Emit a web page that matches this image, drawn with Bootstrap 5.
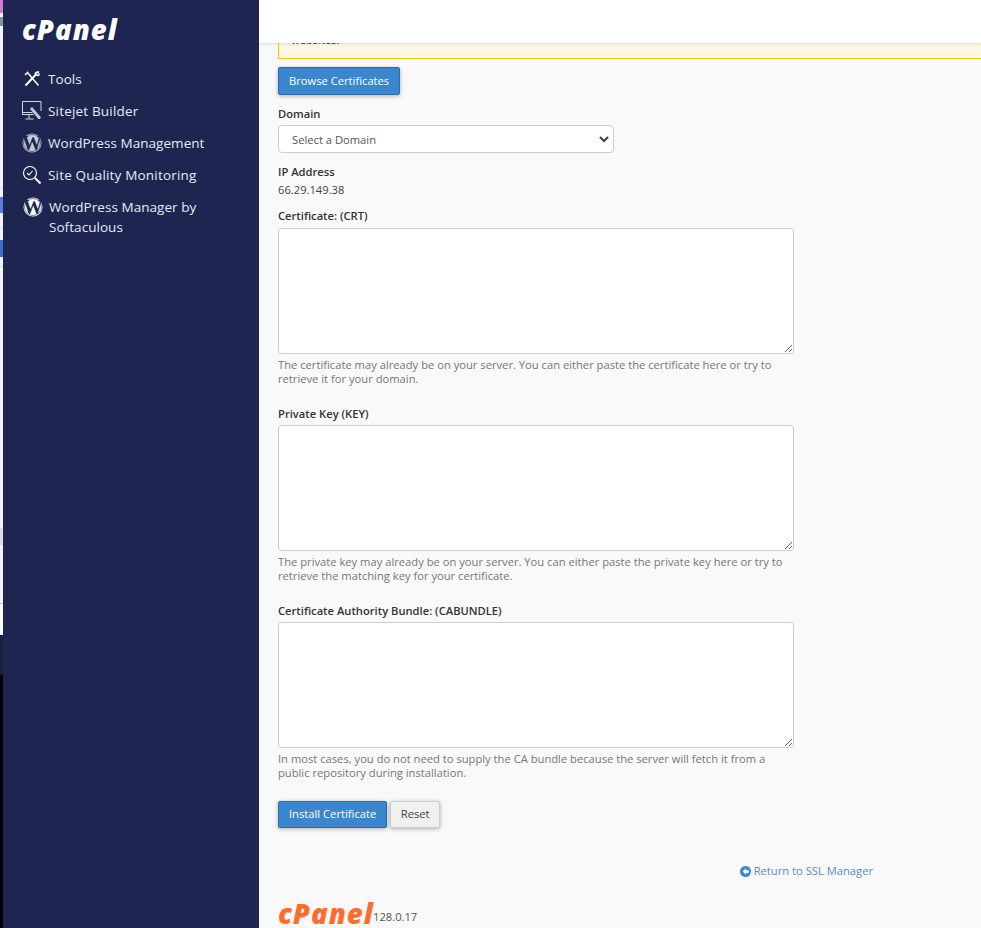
<!DOCTYPE html>
<html lang="en">
<head>
<meta charset="utf-8">
<title>Install SSL</title>
<link href="https://cdn.jsdelivr.net/npm/bootstrap@5.3.0/dist/css/bootstrap.min.css" rel="stylesheet">
<style>
html,body{height:100%;}
body{font-family:"Open Sans","Noto Sans",sans-serif;font-size:11.2px;line-height:16px;color:#333;background:#f9f9f9;overflow:hidden;}
.shell{height:928px;}
.edge-strip{width:3px;flex:none;background:linear-gradient(to bottom,#d27ad6 0 13px,#fff 13px 17px,#8a94a0 17px 26px,#f3f3f3 26px 187px,#ddd 187px 188px,#f3f3f3 188px 197px,#5b7be8 197px 213px,#f3f3f3 213px 227px,#ddd 227px 228px,#f3f3f3 228px 240px,#3a6fd0 240px 257px,#f3f3f3 257px 266px,#ddd 266px 267px,#f3f3f3 267px 528px,#ddd 528px 545px,#f3f3f3 545px 603px,#c8c8c8 603px 604px,#fff 604px 635px,#16233f 635px 675px,#000 675px);}
.side-rail{width:256px;flex:none;background:#1e2551;color:#e8eaf2;padding:0 19px;}
.brand-white{font-family:"Noto Sans",sans-serif;font-size:27.500px;line-height:40px;height:40px;margin-top:10px;margin-bottom:13px;font-weight:900;font-style:italic;color:#fff;letter-spacing:1px;}
.rail-item{display:flex;align-items:flex-start;gap:6px;font-size:13.5px;line-height:20px;padding:6px 0;color:#e8eaf2;text-decoration:none;letter-spacing:.05px;}
.rail-item.rail-wide{letter-spacing:.18px;}
.rail-item svg{flex:none;width:20px;height:20px;}
.rail-item.two-line{gap:6px;padding-left:1px;}
.work-pane{flex:1;min-width:0;background:#f9f9f9;overflow:hidden;}
.top-white{height:43px;background:#fff;box-shadow:0 1px 3px rgba(0,0,0,.12);position:relative;z-index:2;}
.pane-body{padding:0 0 0 19px;}
.clip-alert{height:16px;overflow:hidden;background:#fdf7e3;border:1px solid #f5c800;border-top:0;border-right:0;border-radius:0;margin:0;padding:0 0 0 12px;color:#333;}
.clip-alert span{display:block;margin-top:-11px;line-height:16px;}
.act-btn{font-size:11.2px;line-height:16px;padding:5px 10px;height:28px;border-radius:2px;box-shadow:0 1px 4px rgba(0,0,0,.3);}
.act-btn.act-short{height:27px;padding-top:3px;padding-bottom:5px;}
.act-blue{background:#3a87d0;border:1px solid #2a6cad;color:#fff;}
.act-grey{background:#f0f0f0;border:1px solid #ccc;color:#444;}
.act-btn.act-grey{padding-left:9.500px;padding-right:9.500px;}
.browse-row{margin-top:8px;}
.fld-label{display:block;font-weight:600;font-size:11.2px;line-height:16px;color:#333;margin:0;}
.gap-11{margin-top:11px;}
.gap-10{margin-top:10px;}
.gap-20{margin-top:20px;}
.addr-val{margin-top:2px;color:#444;}
.domain-pick{width:336px;height:28px;font-size:11.2px;line-height:16px;padding:5px 24px 3px 13px;margin-top:3px;border:1px solid #ccc;border-radius:4px;color:#555;background-image:url("data:image/svg+xml,%3csvg xmlns='http://www.w3.org/2000/svg' viewBox='0 0 10 7'%3e%3cpath fill='none' stroke='%23444' stroke-width='2.200' d='M1 1l4 4 4-4'/%3e%3c/svg%3e");background-size:10px 7px;background-position:right 4px center;}
.cert-area{width:516px;height:126px;border:1px solid #ccc;border-radius:4px;margin-top:3px;resize:vertical;min-height:0;display:block;}
.cert-first{margin-top:4px;}
.hint-text{width:516px;font-size:11.2px;line-height:14px;color:#777;margin-top:4px;}
.submit-row{margin-top:21px;gap:3px;}
.return-row{margin-top:35px;margin-right:108px;}
.ret-link{color:#5a8cc0;text-decoration:none;font-size:11.2px;gap:3px;}
.foot-row{margin-top:22px;}
.brand-orange{font-family:"Noto Sans",sans-serif;font-size:27.500px;line-height:26px;width:95px;font-weight:900;font-style:italic;color:#ff6c2c;letter-spacing:1px;}
.ver-num{font-size:11.2px;color:#555;margin-bottom:2px;}
</style>
</head>
<body>
<div class="d-flex shell">
  <div class="edge-strip"></div>
  <nav class="side-rail">
    <div class="brand-white">cPanel</div>
    <a class="rail-item" href="#">
      <svg viewBox="0 0 20 20" fill="none" stroke="#fff" stroke-width="1.500"><path d="M5 3 16.500 16.500M3 6l3-3" /><path d="M17 3.500c-2-1-4 .5-3.500 2.500L3.500 16.500" stroke-width="2"/><path d="M14 6l2.500.5 1-2"/></svg>
      <span>Tools</span></a>
    <a class="rail-item rail-wide" href="#">
      <svg viewBox="0 0 20 20" fill="none" stroke="#d5d8e4" stroke-width="1"><path d="M19 10V.5H.5v13h11"/><path d="M.5 11.500h10M7 13.500v4M3.500 18h8"/><path d="M10 6.500l8.500 10-1.500 1.500-8.500-10z" fill="#b8bccb"/></svg>
      <span>Sitejet Builder</span></a>
    <a class="rail-item" href="#">
      <svg viewBox="0 0 20 20"><circle cx="10" cy="10" r="9.500" fill="#c9ccd8"/><circle cx="10" cy="10" r="8.500" fill="none" stroke="#1e2551" stroke-width=".6"/><text x="10" y="16.500" text-anchor="middle" font-family="Liberation Serif,serif" font-weight="700" font-size="20" fill="#1e2551">W</text></svg>
      <span>WordPress Management</span></a>
    <a class="rail-item rail-wide" href="#">
      <svg viewBox="0 0 20 20" fill="none" stroke="#fff" stroke-width="1.100"><circle cx="8" cy="8" r="6.500"/><path d="M5 8l2 2 3.500-4"/><path d="M13 13l5.500 5.500" stroke-width="2"/></svg>
      <span>Site Quality Monitoring</span></a>
    <a class="rail-item two-line" href="#">
      <svg viewBox="0 0 20 20"><circle cx="10" cy="10" r="9.500" fill="#fff"/><circle cx="10" cy="10" r="8.500" fill="none" stroke="#1e2551" stroke-width=".6"/><text x="10" y="16.500" text-anchor="middle" font-family="Liberation Serif,serif" font-weight="700" font-size="20" fill="#1e2551">W</text></svg>
      <span>WordPress Manager by Softaculous</span></a>
  </nav>
  <main class="work-pane">
    <div class="top-white"></div>
    <div class="pane-body">
      <div class="alert clip-alert"><span>websites.</span></div>
      <div class="browse-row"><button type="button" class="btn act-btn act-blue">Browse Certificates</button></div>
      <form>
        <label class="fld-label gap-11" for="dom">Domain</label>
        <select id="dom" class="form-select domain-pick"><option>Select a Domain</option></select>
        <div class="fld-label gap-11">IP Address</div>
        <div class="addr-val">66.29.149.38</div>
        <label class="fld-label gap-10" for="crt">Certificate: (CRT)</label>
        <textarea id="crt" class="form-control cert-area cert-first"></textarea>
        <div class="hint-text">The certificate may already be on your server. You can either paste the certificate here or try to retrieve it for your domain.</div>
        <label class="fld-label gap-20" for="key">Private Key (KEY)</label>
        <textarea id="key" class="form-control cert-area"></textarea>
        <div class="hint-text">The private key may already be on your server. You can either paste the private key here or try to retrieve the matching key for your certificate.</div>
        <label class="fld-label gap-20" for="cab">Certificate Authority Bundle: (CABUNDLE)</label>
        <textarea id="cab" class="form-control cert-area"></textarea>
        <div class="hint-text">In most cases, you do not need to supply the CA bundle because the server will fetch it from a public repository during installation.</div>
        <div class="d-flex submit-row">
          <button type="button" class="btn act-btn act-short act-blue">Install Certificate</button>
          <button type="reset" class="btn act-btn act-short act-grey">Reset</button>
        </div>
      </form>
      <div class="return-row d-flex justify-content-end">
        <a class="ret-link d-inline-flex align-items-center" href="#">
          <svg width="11" height="11" viewBox="0 0 12 12"><circle cx="6" cy="6" r="6" fill="#3a87d0"/><path d="M6.500 2.500 3 6l3.500 3.500V7.500H9.500v-3H6.500z" fill="#fff"/></svg>
          Return to SSL Manager</a>
      </div>
      <div class="d-flex align-items-end foot-row">
        <span class="brand-orange">cPanel</span><span class="ver-num">128.0.17</span>
      </div>
    </div>
  </main>
</div>
</body>
</html>
